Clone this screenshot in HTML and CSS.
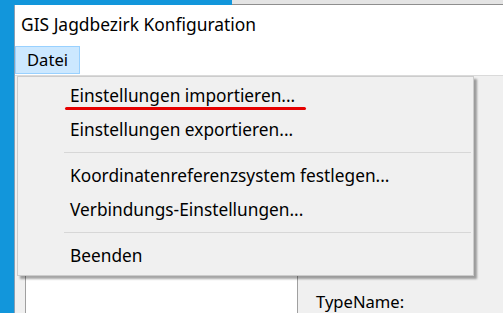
FILE: index.html
```html
<!DOCTYPE html>
<html lang="de">
<head>
    <meta charset="UTF-8">
    <title>GIS Jagdbezirk Konfiguration</title>
    <link rel="stylesheet" href="styles.css">
</head>
<body>
    <div class="behind"></div>

    <div class="window">
        <div class="titlebar">GIS Jagdbezirk Konfiguration</div>

        <div class="menubar">
            <span class="menu-item active">Datei</span>
        </div>

        <div class="content">
            <div class="list"></div>
            <div class="props">
                <span class="prop-label">TypeName:</span>
            </div>
        </div>

        <!-- geöffnetes Datei-Menü -->
        <div class="dropdown">
            <div class="dd-item">Einstellungen importieren...</div>
            <div class="dd-item">Einstellungen exportieren...</div>
            <div class="dd-sep"></div>
            <div class="dd-item">Koordinatenreferenzsystem festlegen...</div>
            <div class="dd-item">Verbindungs-Einstellungen...</div>
            <div class="dd-sep"></div>
            <div class="dd-item">Beenden</div>
            <span class="mark"></span>
        </div>
    </div>
</body>
</html>
```

FILE: styles.css
```css
* {
    margin: 0;
    padding: 0;
    box-sizing: border-box;
}
body {
    background-color: #1296db;
    font-family: 'Noto Sans', 'Open Sans', sans-serif;
    color: #000;
    width: 503px;
    height: 313px;
    overflow: hidden;
    padding: 5px 0 0 14px;
    position: relative;
}
.behind {
    position: absolute;
    left: 232px;
    top: 0;
    right: 0;
    height: 6px;
    background-color: #e4e4e4;
    border-bottom: 2px solid #8e8e8e;
}
.window {
    position: relative;
    height: 308px;
    overflow: hidden;
    background-color: #f0f0f0;
    border-left: 1px solid #8a9fb3;
}
.titlebar {
    height: 39px;
    line-height: 39px;
    padding-left: 6px;
    background-color: white;
    font-size: 17.4px;
}
.menubar {
    height: 32px;
    padding: 2px 0;
    background-color: white;
    border-bottom: 1px solid #dadada;
}
.menu-item {
    display: inline-block;
    height: 28px;
    line-height: 26px;
    padding: 0 11px;
    font-size: 16.6px;
    border: 1px solid transparent;
}
.menu-item.active {
    background-color: #cce8ff;
    border-color: #99d1ff;
}
.content {
    display: flex;
    padding-left: 10px;
}
.list {
    width: 273px;
    height: 220px;
    margin-top: 20px;
    background-color: white;
    border: 1px solid #a0a0a0;
    border-bottom: none;
}
.props {
    padding: 218px 0 0 18px;
    font-size: 16.6px;
    line-height: 16px;
}
.dropdown {
    position: absolute;
    left: 2px;
    top: 71px;
    width: 457px;
    height: 200px;
    padding: 2px;
    background-color: #f0f0f0;
    border: 1px solid #cccccc;
    box-shadow: 3px 3px 2px rgba(0, 0, 0, 0.35);
}
.dd-item {
    height: 34px;
    line-height: 34px;
    padding-left: 50px;
    font-size: 17.3px;
    white-space: nowrap;
}
.dd-sep {
    height: 12px;
    margin-left: 44px;
    padding-top: 5px;
}
.dd-sep::after {
    content: '';
    display: block;
    height: 1px;
    background-color: #d7d7d7;
}
.mark {
    position: absolute;
    left: 47px;
    top: 30px;
    width: 241px;
    height: 3px;
    border-radius: 2px;
    background-color: #e60000;
}
```
